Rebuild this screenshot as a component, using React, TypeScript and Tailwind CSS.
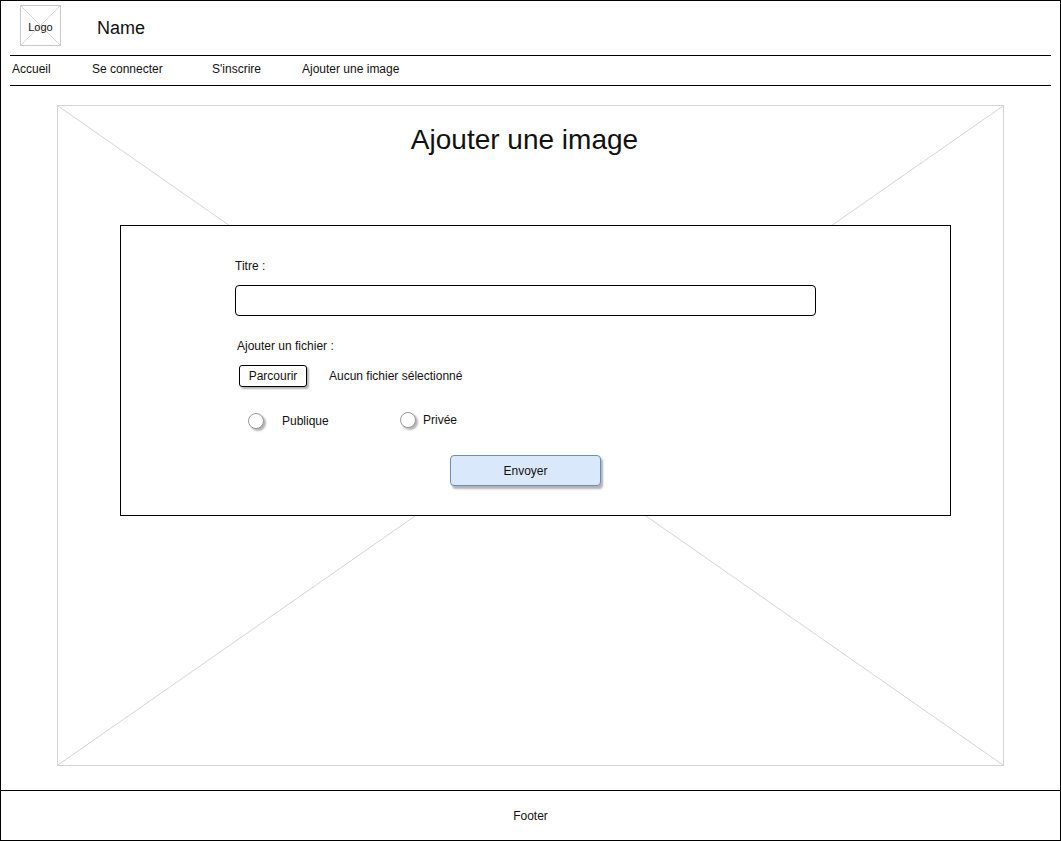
const navItems = [
  { label: "Accueil", width: "w-[80px]" },
  { label: "Se connecter", width: "w-[120px]" },
  { label: "S'inscrire", width: "w-[90px]" },
  { label: "Ajouter une image", width: "" },
];

function CrossBox({ className }: { className?: string }) {
  // wireframe image placeholder: two diagonals
  return (
    <svg className={className} preserveAspectRatio="none" viewBox="0 0 100 100">
      <line x1="0" y1="0" x2="100" y2="100" stroke="#d4d4d4" strokeWidth="1" vectorEffect="non-scaling-stroke" />
      <line x1="100" y1="0" x2="0" y2="100" stroke="#d4d4d4" strokeWidth="1" vectorEffect="non-scaling-stroke" />
    </svg>
  );
}

function Radio({ label, gap }: { label: string; gap: string }) {
  return (
    <label className="flex items-center">
      <span className="h-[16px] w-[16px] rounded-full border border-[#9a9a9a] bg-white shadow-[2px_2px_2px_rgba(0,0,0,0.3)]" />
      <span className={gap}>{label}</span>
    </label>
  );
}

export default function App() {
  return (
    <div className="flex h-[841px] w-[1061px] flex-col border border-black bg-white font-['Liberation_Sans',Arial,sans-serif] text-[12px] text-[#111]">
      <header className="flex h-[54px] items-start pl-[19px]">
        <div className="relative mt-[4px] flex h-[41px] w-[41px] items-center justify-center border border-[#c8c8c8] pt-[3px]">
          <CrossBox className="absolute inset-0 h-full w-full" />
          <span className="relative text-[11px]">Logo</span>
        </div>
        <span className="ml-[36px] self-center text-[18px] leading-none">Name</span>
      </header>

      <nav className="mx-[9px] flex h-[31px] items-center border-y border-black pb-[4px] pl-[2px]">
        {navItems.map((item) => (
          <span key={item.label} className={item.width}>
            {item.label}
          </span>
        ))}
      </nav>

      <main className="flex-1 pl-[56px] pt-[19px]">
        <div className="relative h-[661px] w-[947px] border border-[#d4d4d4]">
          <CrossBox className="absolute inset-0 h-full w-full" />
          <h1 className="relative mt-[18px] pr-[12px] text-center text-[28px] leading-[32px]">Ajouter une image</h1>

          <form className="relative ml-[62px] mt-[69px] h-[291px] w-[831px] border border-black bg-white pl-[114px] pt-[33px]">
            <div className="leading-[14px]">Titre :</div>
            <div className="mt-[12px] h-[31px] w-[581px] rounded-[4px] border border-black" />

            <div className="ml-[2px] mt-[23px] leading-[14px]">Ajouter un fichier :</div>
            <div className="mt-[12px] flex items-center pl-[4px]">
              <button
                type="button"
                className="h-[22px] w-[68px] rounded-[3px] border border-black bg-white shadow-[2px_2px_2px_rgba(0,0,0,0.3)]"
              >
                Parcourir
              </button>
              <span className="ml-[22px]">Aucun fichier sélectionné</span>
            </div>

            <div className="mt-[25px] flex items-center pl-[13px]">
              <div className="w-[152px]">
                <Radio label="Publique" gap="ml-[18px]" />
              </div>
              <div className="-mt-[2px]">
                <Radio label="Privée" gap="ml-[7px]" />
              </div>
            </div>

            <button
              type="button"
              className="ml-[215px] mt-[25px] h-[31px] w-[151px] rounded-[4px] border border-[#6c8ebf] bg-[#dae8fc] shadow-[2px_3px_2px_rgba(0,0,0,0.3)]"
            >
              Envoyer
            </button>
          </form>
        </div>
      </main>

      <footer className="flex h-[50px] items-center justify-center border-t border-black">Footer</footer>
    </div>
  );
}
